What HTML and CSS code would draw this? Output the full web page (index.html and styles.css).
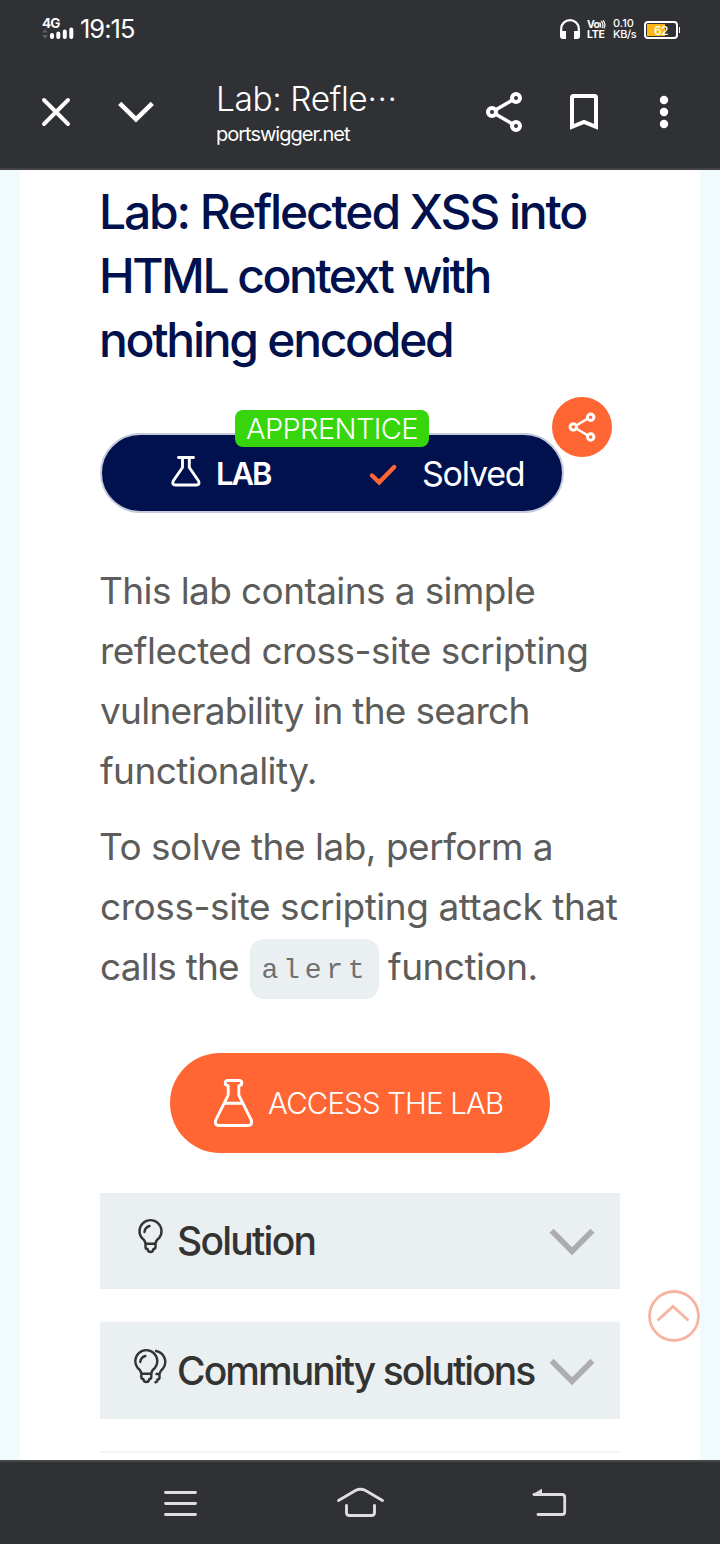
FILE: index.html
```html
<!DOCTYPE html>
<html lang="en">
<head>
<meta charset="utf-8">
<title>Lab: Reflected XSS into HTML context with nothing encoded</title>
<link rel="stylesheet" href="styles.css">
</head>
<body>
<div class="screen">
  <header class="top">
    <div class="status">
      <svg class="signal" viewBox="40 14 36 28" width="36" height="28"><path d="M42 31.500l3-3.500 3 3.500zM42 34l3 4 3-4z" fill="#5b5c60"/><path d="M52 34v2M58.300 32.500v3.500M64.800 30.500V36M71.300 28.500V36" stroke="#fff" stroke-width="4" stroke-linecap="round"/></svg>
      <span class="net">4G</span>
      <span class="clock">19:15</span>
      <div class="status-right">
        <svg viewBox="558 16 24 24" width="24" height="24"><path d="M561.200 33v-5.500a8.800 8.300 0 0 1 17.600 0V33" fill="none" stroke="#fff" stroke-width="2.200"/><path d="M560 30h6v8h-3q-3 0-3-3zM574 30h6v5q0 3-3 3h-3z" fill="#fff"/></svg>
        <div class="volte"><span class="vo">Vo<svg viewBox="0 0 7 9" width="7" height="9"><path d="M.5 2.500q2 2 .3 5M2 1q3.500 3 .8 7M4 .3q3.500 4 .8 8" fill="none" stroke="#fff" stroke-width="1.200"/></svg></span><span class="lte">LTE</span></div>
        <div class="speed"><span>0.10</span><span class="unit">KB/s</span></div>
        <div class="battery"><i class="level"></i><b>62</b></div>
      </div>
    </div>
    <div class="toolbar">
      <svg viewBox="36 92 40 40" width="40" height="40"><path d="M44 100l24 24M68 100l-24 24" stroke="#fff" stroke-width="3.900" stroke-linecap="round"/></svg>
      <svg class="down" viewBox="116 92 40 40" width="40" height="40"><path d="M119.700 103.300L136 119.300l16.300-16" fill="none" stroke="#fff" stroke-width="4.600"/></svg>
      <div class="page-id"><div class="page-title">Lab: Refle<span class="dots">···</span></div><div class="page-host">portswigger.net</div></div>
      <svg class="share" viewBox="484 90 40 44" width="40" height="44"><g fill="none" stroke="#fff" stroke-width="4"><path d="M492 112l24-14M492 112l24 14" stroke-width="3.600"/><g fill="#303134"><circle cx="492" cy="112" r="4"/><circle cx="516" cy="98" r="4"/><circle cx="516" cy="126" r="4"/></g></g></svg>
      <svg class="mark" viewBox="564 90 40 44" width="40" height="44"><path d="M572 126.800V97.500q0-1.500 1.500-1.500h21q1.500 0 1.500 1.500v29.300l-12-5z" fill="none" stroke="#fff" stroke-width="4"/></svg>
      <svg class="more" viewBox="644 90 40 44" width="40" height="44"><g fill="#fff"><circle cx="664" cy="100" r="4.200"/><circle cx="664" cy="112" r="4.200"/><circle cx="664" cy="124" r="4.200"/></g></svg>
    </div>
  </header>

  <main class="page">
    <article class="lab">
      <h1><span class="h-a">Lab: Reflected XSS into</span><br><span class="h-b">HTML context with</span><br><span class="h-c">nothing encoded</span></h1>
      <div class="lab-status">
        <div class="pill">
          <svg viewBox="170 456 32 34" width="32" height="34"><path d="M178.500 457.500h15M182.500 458v9.500l-9.300 13.500q-1.400 4 2.200 4h21q3.600 0 2.200-4l-9.300-13.500V458" fill="none" stroke="#fff" stroke-width="2.900" stroke-linecap="round" stroke-linejoin="round"/></svg>
          <span class="kind">LAB</span>
          <svg class="check" viewBox="368 460 32 26" width="32" height="26"><path d="M373 475.500l7.200 6.800 15-15.300" fill="none" stroke="#ff6633" stroke-width="4.400" stroke-linecap="round"/></svg>
          <span class="solved">Solved</span>
        </div>
        <span class="tag">APPRENTICE</span>
        <span class="share-dot"><svg viewBox="552 397 60 60" width="60" height="60"><g fill="none" stroke="#fff" stroke-width="2.500"><path d="M573.500 427l17-10M573.500 427l17 10"/><g fill="#ff6633" stroke-width="3"><circle cx="573.300" cy="427" r="3.200"/><circle cx="590.700" cy="417.300" r="3.200"/><circle cx="590.700" cy="437" r="3.200"/></g></g></svg></span>
      </div>
      <p><span class="p-a">This lab contains a simple</span><br><span class="p-b">reflected cross-site scripting</span><br><span class="p-c">vulnerability in the search</span><br><span class="p-d">functionality.</span></p>
      <p><span class="p-e">To solve the lab, perform a</span><br><span class="p-f">cross-site scripting attack that</span><br><span class="p-g">calls the</span><code>alert</code><span class="p-h">function.</span></p>
      <div class="access">
        <svg viewBox="212 1076 44 54" width="44" height="54"><path d="M228 1080.500h11q2.800 0 2.800 2.500t-3 2.600v9.500l12.500 25q1.500 5.400-3.500 5.400h-28.600q-5 0-3.500-5.400l12.500-25v-9.500q-3 0-3-2.600t2.800-2.500zM224 1103.300h19" fill="none" stroke="#fff" stroke-width="2.900" stroke-linejoin="round"/></svg>
        <span>ACCESS THE LAB</span>
      </div>
      <section class="fold">
        <svg class="bulb" viewBox="132 1211 36 44" width="36" height="44"><g fill="none" stroke="#333332" stroke-width="2.400" stroke-linecap="round" stroke-linejoin="round"><path d="M145.500 1241.800q0-3.300-3.600-5.800a11 11 0 1 1 17.200 0q-3.600 2.500-3.600 5.800zM145.500 1242v3q0 2 2 2 .4 3 3 3t3-3q2 0 2-2v-3M144.500 1230q.4-4.500 5-6"/></g></svg>
        <span class="f-a">Solution</span>
        <svg class="arrow" viewBox="548 1225 48 32" width="48" height="32"><path d="M551.600 1230.800L572 1251.200l20.400-20.400" fill="none" stroke="#adadad" stroke-width="5.700"/></svg>
      </section>
      <section class="fold fold-next">
        <svg class="bulb" viewBox="132 1341 36 44" width="36" height="44"><g fill="none" stroke="#333332" stroke-width="2.400" stroke-linecap="round" stroke-linejoin="round"><path d="M141.300 1371.800q0-3.300-3.600-5.800a11 11 0 1 1 17.200 0q-3.600 2.500-3.600 5.800zM141.300 1372v3q0 2 2 2 .4 3 3 3t3-3q2 0 2-2v-3M140.300 1360q.4-4.500 5-6M156 1349a11 11 0 0 1 7 17.500q-3 2.500-3.500 5.500h-3M159.500 1372v3.500q0 2-2 2 0 2.500-2 2.800"/></g></svg>
        <span class="f-b">Community solutions</span>
        <svg class="arrow" viewBox="548 1225 48 32" width="48" height="32"><path d="M551.600 1230.800L572 1251.200l20.400-20.400" fill="none" stroke="#adadad" stroke-width="5.700"/></svg>
      </section>
      <hr>
    </article>
    <svg class="to-top" viewBox="648 1290 52 52" width="52" height="52"><g fill="none" stroke="#f7b4a0" stroke-width="2.800"><circle cx="674" cy="1316" r="24.500"/><path d="M657.500 1320.500l15.500-14 15.500 14"/></g></svg>
  </main>

  <nav class="keys">
    <svg viewBox="160 1480 44 44" width="44" height="44"><path d="M165.500 1491.500h30M165.500 1502.500h30M165.500 1513.500h30" stroke="#dedede" stroke-width="2.800" stroke-linecap="round"/></svg>
    <svg class="home" viewBox="334 1480 54 44" width="54" height="44"><path d="M338.500 1499.500l17-10q5-2.600 10 0l17 10M346.500 1504.500v7q0 3 3 3h22q3 0 3-3v-7" fill="none" stroke="#dedede" stroke-width="2.900" stroke-linecap="round"/></svg>
    <svg class="back" viewBox="528 1480 44 44" width="44" height="44"><path d="M534 1493.500h28q2.700 0 2.700 2.700V1511q0 2.500-2.700 2.500h-24" fill="none" stroke="#dedede" stroke-width="2.800" stroke-linecap="round"/><path d="M532 1493.500l10-5.700v6z" fill="#dedede"/></svg>
  </nav>
</div>
</body>
</html>
```
FILE: styles.css
```css
* { box-sizing: border-box; }
body { margin: 0; font-family: Inter, "Liberation Sans", sans-serif; }
svg { display: block; flex: none; }
.screen { width: 720px; height: 1544px; display: flex; flex-direction: column; overflow: hidden; }

.top { height: 170px; flex: none; background: #303134; border-bottom: 2px solid #454348; color: #fff; }
.status { height: 58px; display: flex; align-items: center; padding: 0 40px; position: relative; }
.signal { margin-right: 4px; }
.net { position: absolute; left: 42px; top: 16px; font-size: 13.500px; line-height: 14px; font-weight: 700; letter-spacing: -1px; }
.clock { font-size: 25.500px; letter-spacing: -1px; line-height: 30px; }
.status-right { margin-left: auto; display: flex; align-items: center; }
.volte { width: 20px; margin-left: 5px; display: flex; flex-direction: column; gap: 1px; font-weight: 700; font-size: 10.500px; line-height: 10px; }
.vo { display: flex; height: 9px; letter-spacing: -.8px; }
.vo, .lte, .speed span { line-height: 9px; overflow: visible; }
.lte { letter-spacing: -.3px; }
.speed { width: 25px; margin-left: 6px; display: flex; flex-direction: column; gap: 2px; font-size: 11px; font-weight: 500; }
.unit { letter-spacing: -.4px; }
.battery { position: relative; width: 34px; height: 18px; margin: 1px 2px 0 6px; border: 2px solid #fff; border-radius: 4px; text-align: center; font-size: 12px; line-height: 15px; }
.battery::after { content: ""; position: absolute; right: -4px; top: 4px; width: 1px; height: 6px; background: #fff; }
.battery b { position: relative; font-weight: 500; letter-spacing: -.6px; }
.level { position: absolute; left: 1px; top: 1px; width: 18px; height: 12px; background: #fdb813; }

.toolbar { height: 108px; display: flex; align-items: center; padding-left: 36px; }
.down { margin-left: 40px; }
.page-id { width: 268px; margin: 4px 0 0 60px; }
.page-title { font-size: 33.500px; line-height: 40px; font-weight: 350; letter-spacing: -.4px; white-space: nowrap; }
.dots { font-weight: 350; letter-spacing: .6px; }
.page-host { font-size: 20px; line-height: 30px; letter-spacing: -1px; }
.mark, .more { margin-left: 40px; }

.page { flex: 1; min-height: 0; padding: 0 20px; background: #f1fafd; position: relative; overflow: hidden; }
.lab { height: 100%; background: #fff; padding: 10px 80px 0; }
h1 { margin: 0 0 0 -1px; font-size: 48px; line-height: 64px; font-weight: 480; color: #00114d; white-space: nowrap; }
.h-a { letter-spacing: -2.150px; }
.h-b { letter-spacing: -2.500px; }
.h-c { letter-spacing: -2.300px; }
.lab-status { position: relative; margin-top: 61px; }
.pill { width: 464px; height: 80px; border: 2px solid #c5cbdb; border-radius: 40px; background: #00114d; color: #fff; display: flex; align-items: center; padding-left: 68px; }
.kind { width: 151px; margin-left: 14px; font-size: 31px; font-weight: 560; letter-spacing: -2px; }
.solved { margin-left: 23px; font-size: 34px; font-weight: 400; letter-spacing: -1.200px; }
.tag { position: absolute; left: 135px; top: -23px; width: 194px; height: 37px; border-radius: 8px; background: #37d50c; color: #fff; font-size: 29px; line-height: 38px; font-weight: 340; letter-spacing: -.6px; text-align: center; }
.share-dot { position: absolute; left: 452px; top: -36px; width: 60px; height: 60px; border-radius: 50%; background: #f63; }

p { margin: 16px 0 0; font-size: 37px; line-height: 60px; font-weight: 400; color: #5c5c5b; white-space: nowrap; }
.lab-status + p { margin-top: 48px; }
.p-a { margin-left: -1px; letter-spacing: -.600px; }
.p-b { letter-spacing: -.520px; }
.p-c { letter-spacing: -.720px; }
.p-d { letter-spacing: -.580px; }
.p-e { margin-left: -1px; letter-spacing: -.500px; }
.p-f { letter-spacing: -.440px; }
.p-g { letter-spacing: -.750px; }
.p-h { letter-spacing: -.500px; }
code { display: inline-block; width: 129px; height: 60px; margin: 0 9px 0 11px; vertical-align: top; border-radius: 14px; background: #eaeff2; font-family: "Liberation Mono", monospace; font-size: 28px; text-align: center; line-height: 64px; letter-spacing: 4.800px; padding-left: 2px; color: #707070; position: relative; top: 2px; }
.access { width: 380px; height: 100px; margin: 56px auto 0; border-radius: 50px; background: #f63; color: #fff; display: flex; align-items: center; padding-left: 42px; font-size: 29.500px; font-weight: 340; letter-spacing: -.850px; white-space: nowrap; }
.access span { margin: -1px 0 0 12px; }
.fold { height: 96px; margin-top: 40px; background: #eaeff2; display: flex; align-items: center; padding-left: 32px; font-size: 39px; font-weight: 480; color: #333332; position: relative; white-space: nowrap; }
.fold span { margin: -1px 0 0 9px; }
.f-a { letter-spacing: -1.750px; }
.f-b { letter-spacing: -1.930px; }
.fold .bulb { margin-bottom: 13px; }
.fold .arrow { margin-left: auto; margin-right: 24px; }
.fold-next { height: 98px; margin-top: 32px; border-top: 2px solid #f2f4f4; }
hr { margin: 32px 0 0; border: 0; height: 2px; background: #f3f4f4; }
.to-top { position: absolute; left: 648px; top: 1120px; }

.keys { height: 84px; flex: none; background: #303134; border-top: 2px solid #464846; display: flex; align-items: center; padding: 0 0 1px 160px; }
.home { margin-left: 130px; }
.back { margin-left: 140px; }
```
